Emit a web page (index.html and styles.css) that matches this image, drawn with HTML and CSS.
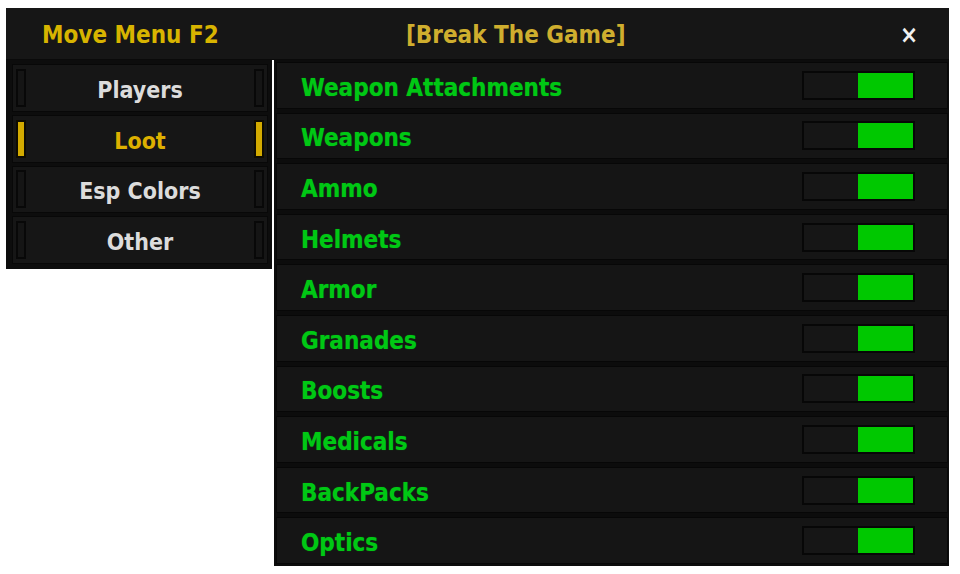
FILE: index.html
```html
<!DOCTYPE html>
<html>
<head>
<meta charset="utf-8">
<link rel="stylesheet" href="styles.css">
</head>
<body>
<div class="window">
  <div class="header">
    <span class="move">Move Menu F2</span>
    <span class="title">[Break The Game]</span>
    <span class="close">×</span>
  </div>
  <div class="main">
    <div class="tabs">
      <div class="tab"><span class="ind"></span><span class="tab-label">Players</span><span class="ind"></span></div>
      <div class="tab active"><span class="ind"></span><span class="tab-label">Loot</span><span class="ind"></span></div>
      <div class="tab"><span class="ind"></span><span class="tab-label">Esp Colors</span><span class="ind"></span></div>
      <div class="tab"><span class="ind"></span><span class="tab-label">Other</span><span class="ind"></span></div>
    </div>
    <div class="list">
      <div class="row"><span class="label">Weapon Attachments</span><span class="toggle"><span class="knob"></span></span></div>
      <div class="row"><span class="label">Weapons</span><span class="toggle"><span class="knob"></span></span></div>
      <div class="row"><span class="label">Ammo</span><span class="toggle"><span class="knob"></span></span></div>
      <div class="row"><span class="label">Helmets</span><span class="toggle"><span class="knob"></span></span></div>
      <div class="row"><span class="label">Armor</span><span class="toggle"><span class="knob"></span></span></div>
      <div class="row"><span class="label">Granades</span><span class="toggle"><span class="knob"></span></span></div>
      <div class="row"><span class="label">Boosts</span><span class="toggle"><span class="knob"></span></span></div>
      <div class="row"><span class="label">Medicals</span><span class="toggle"><span class="knob"></span></span></div>
      <div class="row"><span class="label">BackPacks</span><span class="toggle"><span class="knob"></span></span></div>
      <div class="row"><span class="label">Optics</span><span class="toggle"><span class="knob"></span></span></div>
    </div>
  </div>
</div>
</body>
</html>
```
FILE: styles.css
```css
html, body {
  margin: 0;
  padding: 0;
  background: #ffffff;
}
body {
  font-family: "DejaVu Sans Condensed", "DejaVu Sans", sans-serif;
  font-stretch: condensed;
}
.window {
  margin: 8px 0 0 6px;
  width: 943px;
}
.header {
  height: 52px;
  background: #161616;
  border-bottom: 1px solid #0a0a0a;
  box-sizing: border-box;
  display: flex;
  align-items: center;
  padding: 2px 31px 0 36px;
}
.move {
  width: 364px;
  color: #d8b400;
  font-weight: bold;
  font-size: 24px;
}
.title {
  flex: 1;
  color: #cfae2e;
  font-size: 24px;
  font-weight: 600;
}
.close {
  color: #f0f0f0;
  font-weight: bold;
  font-size: 24px;
}
.main {
  display: flex;
  align-items: flex-start;
}
.tabs {
  width: 266px;
  height: 209px;
  background: #0d0d0d;
  box-sizing: border-box;
  padding: 4px 4px 5px 6px;
  display: grid;
  grid-template-rows: repeat(4, 1fr);
  gap: 3px;
}
.tab {
  background: #161616;
  border: 1px solid #080808;
  display: flex;
  align-items: center;
  padding: 0 3px;
}
.ind {
  width: 10px;
  height: 38px;
  box-sizing: border-box;
  border: 2px solid #080808;
  background: #151515;
}
.tab.active .ind {
  background: #d4ab00;
  border-color: #0f0c00;
}
.tab-label {
  flex: 1;
  text-align: center;
  color: #dcdcdc;
  font-weight: bold;
  font-size: 23px;
  padding-top: 4px;
}
.tab.active .tab-label {
  color: #ddb000;
}
.list {
  margin-left: 2px;
  width: 675px;
  height: 506px;
  background: #0c0c0c;
  box-sizing: border-box;
  padding: 2px 1px 2px 2px;
  display: grid;
  grid-template-rows: repeat(10, 1fr);
  gap: 4px;
}
.row {
  background: #151515;
  border: 1px solid #070707;
  display: flex;
  align-items: center;
  padding: 0 32px 0 24px;
}
.label {
  flex: 1;
  color: #00c814;
  font-weight: bold;
  font-size: 24px;
  padding-top: 5px;
  text-shadow: 0 0 1px rgba(0, 200, 20, 0.6);
}
.toggle {
  width: 113px;
  height: 29px;
  box-sizing: border-box;
  border: 2px solid #070707;
  background: #161616;
  display: flex;
  justify-content: flex-end;
}
.knob {
  width: 55px;
  background: #00c800;
}
```
